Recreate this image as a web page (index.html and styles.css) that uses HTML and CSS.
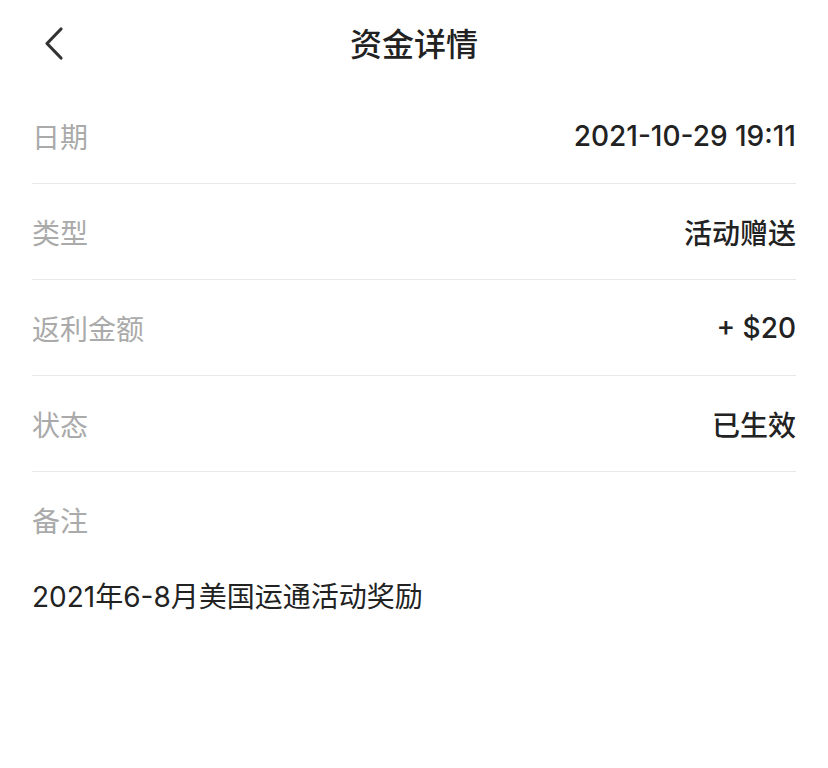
FILE: index.html
```html
<!DOCTYPE html>
<html lang="zh-CN">

<head>
    <meta charset="UTF-8">
    <meta name="viewport" content="width=device-width, initial-scale=1.0">
    <title>资金详情</title>
    <link rel="stylesheet" href="styles.css">
</head>

<body>
    <header class="nav-bar">
        <a class="back-btn" href="#">
            <svg width="24" height="36" viewBox="0 0 24 36">
                <polyline points="17,3 3,17.5 17,32" fill="none" stroke="#333" stroke-width="3.2"
                    stroke-linecap="round" stroke-linejoin="round" />
            </svg>
        </a>
        <h1 class="nav-title">资金详情</h1>
    </header>

    <main class="detail">
        <div class="detail-row">
            <span class="label">日期</span>
            <span class="value">2021-10-29 19:11</span>
        </div>
        <div class="detail-row">
            <span class="label">类型</span>
            <span class="value">活动赠送</span>
        </div>
        <div class="detail-row">
            <span class="label">返利金额</span>
            <span class="value">+ $20</span>
        </div>
        <div class="detail-row">
            <span class="label">状态</span>
            <span class="value">已生效</span>
        </div>
        <div class="detail-row no-border">
            <span class="label">备注</span>
        </div>
        <p class="remark">2021年6-8月美国运通活动奖励</p>
    </main>
</body>

</html>
```

FILE: styles.css
```css
body {
    margin: 0;
    background-color: #fff;
    font-family: Inter, "Noto Sans CJK SC", sans-serif;
    color: #222;
}

.nav-bar {
    position: relative;
    height: 88px;
    display: flex;
    align-items: center;
    justify-content: center;
}

.back-btn {
    position: absolute;
    left: 44px;
    top: 26px;
    display: flex;
}

.nav-title {
    margin: 0 0 4px;
    font-size: 32px;
    font-weight: 500;
    color: #222;
}

.detail {
    padding: 0 32px;
}

.detail-row {
    height: 95px;
    display: flex;
    align-items: center;
    justify-content: space-between;
    border-bottom: 1px solid #e8e8e8;
}

.detail-row.no-border {
    border-bottom: none;
}

.label {
    font-size: 28px;
    color: #aaa;
}

.value {
    font-size: 28px;
    font-weight: 500;
    color: #222;
}

.remark {
    margin: 0;
    padding-top: 8px;
    font-size: 28px;
    color: #222;
}
```
